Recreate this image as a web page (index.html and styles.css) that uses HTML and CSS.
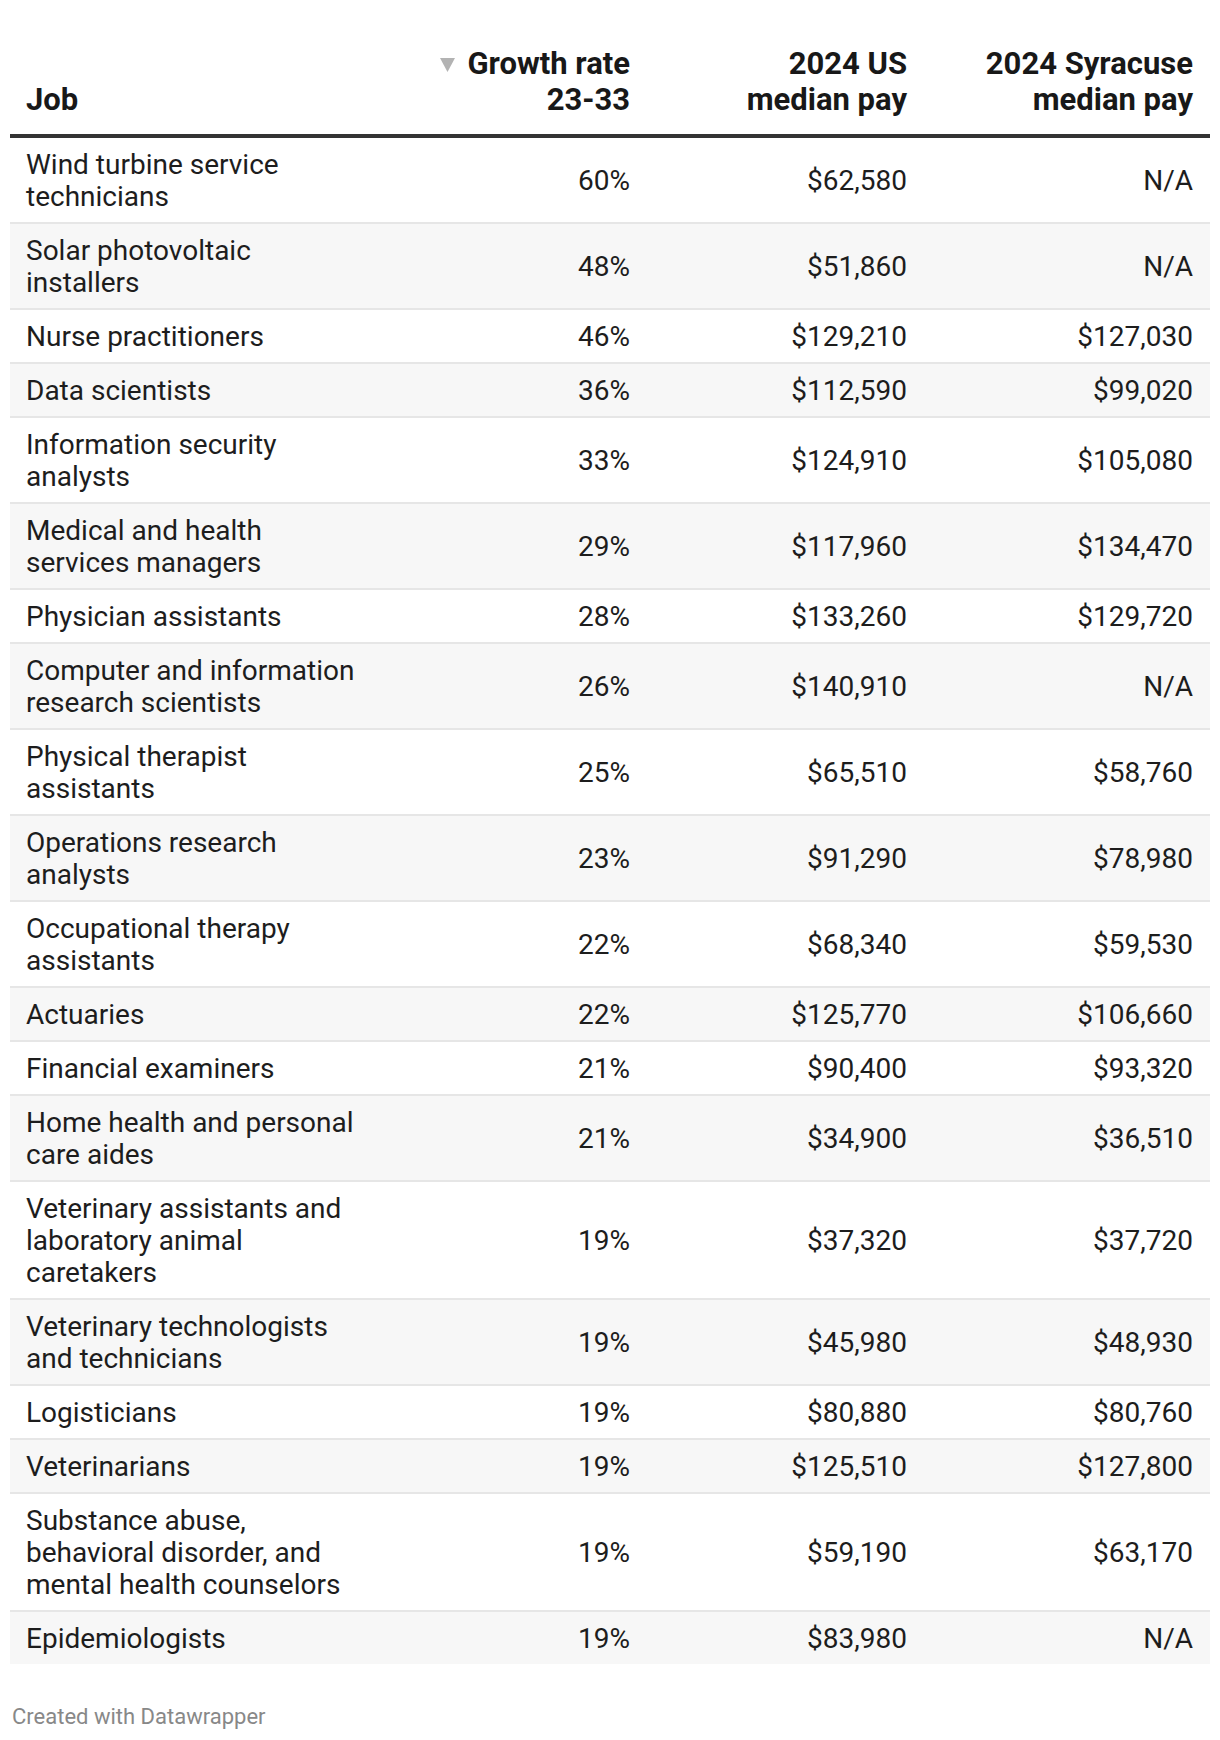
FILE: index.html
```html
<!DOCTYPE html>
<html lang="en">
<head>
<meta charset="utf-8">
<title>Fastest growing jobs</title>
<link rel="stylesheet" href="styles.css">
</head>
<body>
<div class="chart">
  <table class="dw-table">
    <colgroup>
      <col class="c-job">
      <col class="c-growth">
      <col class="c-us">
      <col class="c-syr">
    </colgroup>
    <thead>
      <tr>
        <th class="left">Job</th>
        <th class="num"><span class="sort"><svg width="15" height="14" viewBox="0 0 15 14"><polygon points="0,0 15,0 7.5,14" fill="#b3b3b3"/></svg></span>Growth rate<br>23-33</th>
        <th class="num">2024 US<br>median pay</th>
        <th class="num">2024 Syracuse<br>median pay</th>
      </tr>
    </thead>
    <tbody>
      <tr><td>Wind turbine service technicians</td><td class="num">60%</td><td class="num">$62,580</td><td class="num">N/A</td></tr>
      <tr><td>Solar photovoltaic installers</td><td class="num">48%</td><td class="num">$51,860</td><td class="num">N/A</td></tr>
      <tr><td>Nurse practitioners</td><td class="num">46%</td><td class="num">$129,210</td><td class="num">$127,030</td></tr>
      <tr><td>Data scientists</td><td class="num">36%</td><td class="num">$112,590</td><td class="num">$99,020</td></tr>
      <tr><td>Information security analysts</td><td class="num">33%</td><td class="num">$124,910</td><td class="num">$105,080</td></tr>
      <tr><td>Medical and health services managers</td><td class="num">29%</td><td class="num">$117,960</td><td class="num">$134,470</td></tr>
      <tr><td>Physician assistants</td><td class="num">28%</td><td class="num">$133,260</td><td class="num">$129,720</td></tr>
      <tr><td>Computer and information research scientists</td><td class="num">26%</td><td class="num">$140,910</td><td class="num">N/A</td></tr>
      <tr><td>Physical therapist assistants</td><td class="num">25%</td><td class="num">$65,510</td><td class="num">$58,760</td></tr>
      <tr><td>Operations research analysts</td><td class="num">23%</td><td class="num">$91,290</td><td class="num">$78,980</td></tr>
      <tr><td>Occupational therapy assistants</td><td class="num">22%</td><td class="num">$68,340</td><td class="num">$59,530</td></tr>
      <tr><td>Actuaries</td><td class="num">22%</td><td class="num">$125,770</td><td class="num">$106,660</td></tr>
      <tr><td>Financial examiners</td><td class="num">21%</td><td class="num">$90,400</td><td class="num">$93,320</td></tr>
      <tr><td>Home health and personal care aides</td><td class="num">21%</td><td class="num">$34,900</td><td class="num">$36,510</td></tr>
      <tr><td>Veterinary assistants and laboratory animal caretakers</td><td class="num">19%</td><td class="num">$37,320</td><td class="num">$37,720</td></tr>
      <tr><td>Veterinary technologists and technicians</td><td class="num">19%</td><td class="num">$45,980</td><td class="num">$48,930</td></tr>
      <tr><td>Logisticians</td><td class="num">19%</td><td class="num">$80,880</td><td class="num">$80,760</td></tr>
      <tr><td>Veterinarians</td><td class="num">19%</td><td class="num">$125,510</td><td class="num">$127,800</td></tr>
      <tr><td>Substance abuse, behavioral disorder, and mental health counselors</td><td class="num">19%</td><td class="num">$59,190</td><td class="num">$63,170</td></tr>
      <tr><td>Epidemiologists</td><td class="num">19%</td><td class="num">$83,980</td><td class="num">N/A</td></tr>
    </tbody>
  </table>
  <div class="footer">Created with Datawrapper</div>
</div>
</body>
</html>
```

FILE: styles.css
```css
html, body {
  margin: 0;
  padding: 0;
  background: #ffffff;
}

body {
  font-family: Roboto, "Liberation Sans", Arial, sans-serif;
  color: #1d1d1d;
}

.chart {
  padding: 36px 10px 0 10px;
}

.dw-table {
  width: 1200px;
  border-collapse: collapse;
  table-layout: fixed;
  font-size: 28px;
}

.c-job { width: 368px; }
.c-growth { width: 269px; }
.c-us { width: 277px; }
.c-syr { width: 286px; }

.dw-table th {
  font-size: 31px;
  font-weight: 700;
  line-height: 36px;
  padding: 10px 17px 16px 16px;
  vertical-align: bottom;
  color: #181818;
  border-bottom: 4px solid #333333;
}

.dw-table th.left {
  text-align: left;
}

.dw-table .num {
  text-align: right;
}

.sort {
  display: inline-block;
  margin-right: 12px;
  vertical-align: 2px;
}

.sort svg {
  display: block;
}

.dw-table td {
  line-height: 32px;
  padding: 11px 17px 9px 16px;
  border-bottom: 2px solid #e6e6e6;
  vertical-align: middle;
  color: #1d1d1d;
}

.dw-table tbody tr:nth-child(even) td {
  background: #f7f7f7;
}

.dw-table tbody tr:last-child td {
  border-bottom: none;
}

.footer {
  margin-top: 40px;
  font-size: 22px;
  line-height: 26px;
  color: #888888;
  padding-left: 2px;
}
```
